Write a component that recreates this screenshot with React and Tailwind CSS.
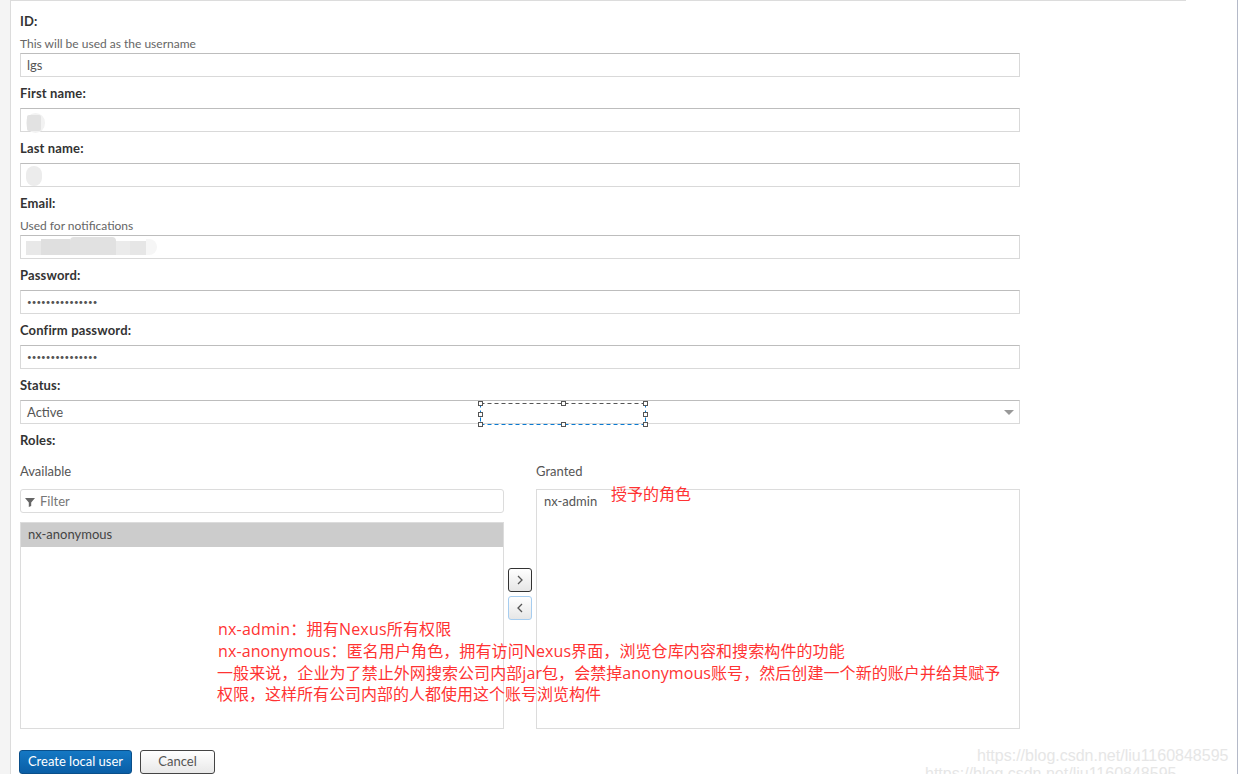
import { useState } from 'react';

const inputCls = "flex h-6 w-full items-center border border-[#d9d9d9] border-t-[#bdbdbd] bg-white px-[5px] text-[13px] leading-[22px] text-[#555]";
const labelCls = "flex h-[31px] items-center pt-0.5 text-[13px] font-bold tracking-[0.15px] text-[#333]";
const helpCls = "flex h-[17px] items-center pb-0.5 text-[12px] text-[#666]";
const noteFont = "font-['Open_Sans','Noto_Sans_CJK_SC',sans-serif]";
const watermarkCls = "font-['Liberation_Sans',sans-serif] text-[16px] leading-[22px] text-[#e6e6e6]";

function Field({ label, help, children }) {
    return (
        <div>
            <div className={labelCls}>{label}</div>
            {help && <div className={helpCls}>{help}</div>}
            <div className={inputCls}>{children}</div>
        </div>
    );
}

function Dots() {
    return <span className="pl-px text-[8px] leading-[20px] tracking-[0.05px] text-[#555]">•••••••••••••••</span>;
}

// recuadro de seleccion del editor de capturas
function SelectionBox() {
    const handles = [[0.5, 0.5], [83.5, 0.5], [165.5, 0.5], [0.5, 11.5], [165.5, 11.5], [0.5, 21.5], [83.5, 21.5], [165.5, 21.5]];
    return (
        <svg className="absolute left-[478px] top-[401px]" width="170" height="26">
            <path d="M2.5 2.5H167.5" stroke="#555" strokeDasharray="4 3" fill="none" />
            <path d="M2.5 23.5H167.5M2.5 2.5V23.5M167.5 2.5V23.5" stroke="#0a7ad1" strokeDasharray="4 3" fill="none" />
            {handles.map(([x, y]) => (
                <rect key={`${x}-${y}`} x={x} y={y} width="4" height="4" fill="#fff" stroke="#555" />
            ))}
        </svg>
    );
}

export default function App() {
    const [status] = useState("Active");

    return (
        <div className="relative h-[774px] w-[1238px] overflow-hidden bg-white font-['Lato','Open_Sans',sans-serif]">
            <div className="flex h-full">
                {/* franja izquierda */}
                <div className="h-full w-[11px] shrink-0 border-r border-[#dcdcdc] bg-[#f4f4f4]" />

                <div className="h-full w-[1175px] shrink-0 border-t border-[#dcdcdc] pl-[9px] pt-1">
                    <form className="w-[1000px]">
                        <Field label="ID:" help="This will be used as the username">
                            <span className="pl-px">lgs</span>
                        </Field>

                        {/* los nombres van tapados con manchas */}
                        <Field label="First name:">
                            <div className="mt-[6px] flex h-5 w-[19px] items-center rounded-full bg-[#f2f2f2] pl-px">
                                <div className="h-4 w-[14px] rounded-[2px] bg-[#e2e2e2]" />
                            </div>
                        </Field>
                        <Field label="Last name:">
                            <div className="mt-px h-5 w-4 rounded-full bg-[#ececec]" />
                        </Field>
                        <Field label="Email:" help="Used for notifications">
                            <div className="-mt-[3px] flex items-end">
                                <div className="h-[14px] w-[15px] bg-[#e8e8e8]" />
                                <div className="h-4 w-[29px] bg-[#dfdfdf]" />
                                <div className="h-[18px] w-[46px] rounded-t-[4px] bg-[#e1e1e1]" />
                                <div className="h-[14px] w-[14px] bg-[#ebebeb]" />
                                <div className="h-[14px] w-4 bg-[#e6e6e6]" />
                                <div className="h-4 w-[11px] rounded-r-full bg-[#f6f6f6]" />
                            </div>
                        </Field>

                        <Field label="Password:"><Dots /></Field>
                        <Field label="Confirm password:"><Dots /></Field>

                        <div className={labelCls}>Status:</div>
                        <div className={`${inputCls} justify-between`}>
                            <span className="pl-px">{status}</span>
                            <span className="h-0 w-0 border-x-[5px] border-t-[5px] border-x-transparent border-t-[#999]" />
                        </div>

                        <div className={labelCls}>Roles:</div>

                        <div className="flex">
                            <div className="w-[484px]">
                                <div className="flex h-[34px] items-center text-[13px] text-[#555]">Available</div>
                                <div className="flex h-6 items-center gap-[5px] rounded-[3px] border border-[#dcdcdc] px-1 pt-px text-[13px] text-[#777]">
                                    <svg width="10" height="10" viewBox="0 0 10 10">
                                        <path d="M0 1h10L6.2 5.4V9L3.8 10V5.4Z" fill="#666" />
                                    </svg>
                                    Filter
                                </div>
                                <div className="mt-[9px] h-[207px] border border-[#dcdcdc]">
                                    <div className="flex h-6 items-center bg-[#cccccc] px-[7px] text-[13px] text-[#444]">nx-anonymous</div>
                                </div>
                            </div>

                            <div className="flex w-[32px] flex-col items-center gap-1 pt-[113px]">
                                <button type="button" className="flex h-6 w-6 items-center justify-center rounded-[3px] border border-[#333] bg-gradient-to-b from-white to-[#e6e6e6] text-[#555]">
                                    <svg width="8" height="10" viewBox="0 0 8 10"><path d="M2 1l4 4-4 4" stroke="#555" strokeWidth="1.3" fill="none" /></svg>
                                </button>
                                <button type="button" className="flex h-6 w-6 items-center justify-center rounded-[3px] border border-[#a6cdf0] bg-gradient-to-b from-white to-[#e6e6e6] text-[#555]">
                                    <svg width="8" height="10" viewBox="0 0 8 10"><path d="M6 1L2 5l4 4" stroke="#555" strokeWidth="1.3" fill="none" /></svg>
                                </button>
                            </div>

                            <div className="w-[484px]">
                                <div className="flex h-[34px] items-center text-[13px] text-[#555]">Granted</div>
                                <div className="h-[240px] border border-[#dcdcdc] px-[7px] pt-[2px] text-[13px] leading-[18px] text-[#555]">nx-admin</div>
                            </div>
                        </div>

                        <div className="-ml-px mt-[21px] flex gap-2">
                            <button type="button" className="h-6 w-[113px] rounded-[3px] border border-[#0a4f8a] bg-gradient-to-b from-[#1478c4] to-[#0a5ea6] text-[13px] text-white">Create local user</button>
                            <button type="button" className="h-6 w-[75px] rounded-[3px] border border-[#444] bg-gradient-to-b from-white to-[#e8e8e8] text-[13px] text-[#555]">Cancel</button>
                        </div>
                    </form>
                </div>

                <div className="flex-1" />
                <div className="h-full w-px bg-[#b4b9c8]" />
            </div>

            <SelectionBox />

            {/* anotaciones */}
            <div className={`absolute left-[611px] top-[483px] ${noteFont} text-[16px] leading-[22px] text-[#ff3333]`}>授予的角色</div>
            <div className={`absolute left-[218px] top-[618px] whitespace-nowrap ${noteFont} text-[16px] leading-[22px] text-[#ff3333]`}>
                <div className="tracking-[0.2px]">nx-admin：拥有Nexus所有权限</div>
                <div className="tracking-[0.1px]">nx-anonymous：匿名用户角色，拥有访问Nexus界面，浏览仓库内容和搜索构件的功能</div>
                <div className="-ml-px tracking-[0.07px]">一般来说，企业为了禁止外网搜索公司内部jar包，会禁掉anonymous账号，然后创建一个新的账户并给其赋予</div>
                <div className="-ml-px leading-[20px]">权限，这样所有公司内部的人都使用这个账号浏览构件</div>
            </div>

            {/* marca de agua */}
            <div className="absolute left-[925px] top-[745px] flex flex-col items-start">
                <div className={`ml-[52px] h-[18px] ${watermarkCls}`}>https://blog.csdn.net/liu1160848595</div>
                <div className={watermarkCls}>https://blog.csdn.net/liu1160848595</div>
            </div>
        </div>
    );
}
